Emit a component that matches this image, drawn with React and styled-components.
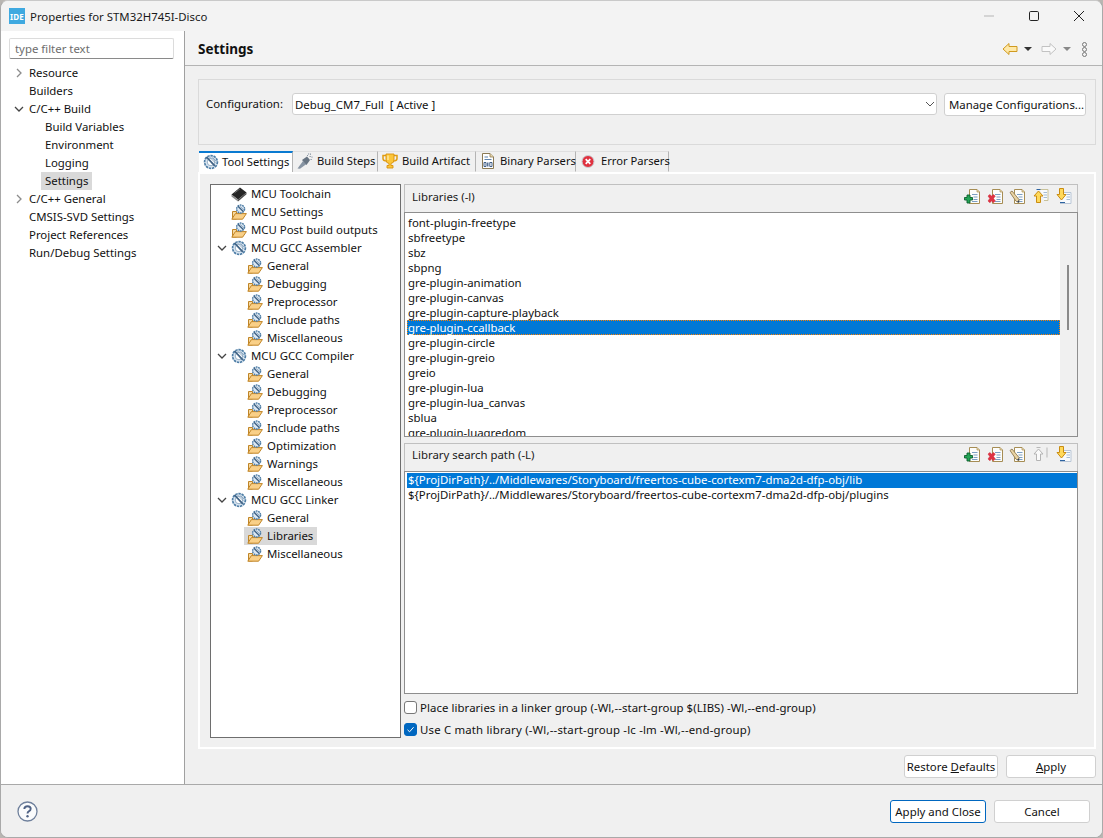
import React from 'react'
import styled, { createGlobalStyle } from 'styled-components'

const GlobalStyle = createGlobalStyle`
  html, body {
    margin: 0;
    padding: 0;
    background: #b9b6b2;
    overflow: hidden;
  }
  * {
    box-sizing: border-box;
  }
`

const GearIcon = () => (
  <svg width="16" height="16" viewBox="0 0 16 16">
    <circle cx="8" cy="8" r="6.4" fill="#dbe7f2" stroke="#4f7ea6" strokeWidth="1.7" strokeDasharray="2.4 0.8" />
    <circle cx="8" cy="8" r="3.8" fill="#fff" stroke="#7d9db9" strokeWidth="0.8" />
    <path d="M3.5 3 L11.8 11.8" stroke="#3f6285" strokeWidth="1.8" />
    <path d="M6.5 3 L12.5 9 M9.5 3.5 L13 7" stroke="#8aa6bf" strokeWidth="0.9" />
  </svg>
)

const GearFolderIcon = () => (
  <svg width="16" height="16" viewBox="0 0 16 16">
    <path d="M1.5 15 V7.5 H5.5 V15 Z" fill="#f6d9a0" stroke="#c08526" strokeWidth="1" />
    <path d="M0.8 15.2 L4.4 9.6 H15.4 L11.6 15.2 Z" fill="#f9d088" stroke="#c08526" strokeWidth="1" />
    <circle cx="9.6" cy="5" r="4" fill="#dbe7f2" stroke="#4f7ea6" strokeWidth="1.4" strokeDasharray="1.8 0.7" />
    <path d="M7 2.3 L12.3 7.6" stroke="#3f6285" strokeWidth="1.4" />
    <path d="M9.3 2.3 L13 6" stroke="#8aa6bf" strokeWidth="0.8" />
  </svg>
)

const ChipIcon = () => (
  <svg width="16" height="16" viewBox="0 0 16 16">
    <path d="M0.5 8.5 L9 1.5 L15.5 6.5 L7 13.5 Z" fill="#262626" />
    <path d="M0.5 8.5 L7 13.5 L7 15.5 L0.5 10.5 Z" fill="#8a8a8a" />
    <path d="M7 13.5 L15.5 6.5 L15.5 8.2 L7 15.5 Z" fill="#4a4a4a" />
    <path d="M3.5 7 L9 2.8" stroke="#666" strokeWidth="1" />
  </svg>
)

const SprayIcon = () => (
  <svg width="16" height="16" viewBox="0 0 16 16">
    <path d="M0.5 15.5 L6 8 L9.5 11 L3 15.8 Z" fill="#8794a3" />
    <path d="M5 7 L10 3.5 L13 7 L9.5 12 Z" fill="#677482" />
    <path d="M11 1 h1.2 M13.5 0.5 v1.3 M12.5 3.5 h1.3 M15 3.5 v1.2 M13.5 6.5 h1.3 M10 2.5 h1" stroke="#8794a3" strokeWidth="1" />
  </svg>
)

const TrophyIcon = () => (
  <svg width="16" height="16" viewBox="0 0 16 16">
    <path d="M1 2.5 H15 V5.5 Q15 8 11 8 H5 Q1 8 1 5.5 Z" fill="none" stroke="#e09c10" strokeWidth="1.5" />
    <path d="M4 1 H12 V7 Q12 10 9 10.5 V12.5 H11 V15 H5 V12.5 H7 V10.5 Q4 10 4 7 Z" fill="#fcc63a" stroke="#d9920f" strokeWidth="0.9" />
    <path d="M6 2.5 V7" stroke="#fff0b5" strokeWidth="1.2" />
  </svg>
)

const BinaryIcon = () => (
  <svg width="16" height="16" viewBox="0 0 16 16">
    <path d="M2.5 0.5 H10 L13.5 4 V15.5 H2.5 Z" fill="#fff" stroke="#8b7a55" strokeWidth="1" />
    <path d="M10 0.5 V4 H13.5" fill="#ead9aa" stroke="#8b7a55" strokeWidth="0.8" />
    <path d="M4.5 4 H8 M4.5 6.5 H11.5" stroke="#5c82ad" strokeWidth="1" />
    <path d="M4 9.5 H6 V13.5 H4 Z M9.8 9.5 H12 V13.5 H9.8 Z" fill="none" stroke="#2d4f7c" strokeWidth="0.9" />
    <path d="M7.8 9.5 V13.5" stroke="#2d4f7c" strokeWidth="1.2" />
  </svg>
)

const ErrorIcon = () => (
  <svg width="16" height="16" viewBox="0 0 16 16">
    <circle cx="8" cy="8.5" r="6" fill="#e0313f" stroke="#c9d1d6" strokeWidth="1" />
    <path d="M5.7 6.2 L10.3 10.8 M10.3 6.2 L5.7 10.8" stroke="#fff" strokeWidth="1.7" />
  </svg>
)

const DocBase = () => (
  <>
    <path d="M5.5 1.5 H13 L15.5 4 V15.5 H5.5 Z" fill="#fdfdfb" stroke="#a68d54" strokeWidth="1" />
    <path d="M13 1.5 V4 H15.5" fill="#e7d7ac" stroke="#a68d54" strokeWidth="0.7" />
    <path d="M8 6.5 H13.5 M9.5 9 H13.5 M9.5 11.5 H13.5 M8 13.5 H13.5" stroke="#7c9fc4" strokeWidth="1" />
  </>
)

const AddIcon = () => (
  <svg width="16" height="16" viewBox="0 0 16 16">
    <DocBase />
    <path d="M3 7 H6 V9.5 H8.5 V12 H6 V15 H3 V12 H0.5 V9.5 H3 Z" fill="#23a455" stroke="#0c5f2e" strokeWidth="0.9" />
  </svg>
)

const RemoveIcon = () => (
  <svg width="16" height="16" viewBox="0 0 16 16">
    <DocBase />
    <path d="M1 8 L3 6.5 L4.6 8.3 L6.3 6.5 L8.3 8 L6.5 10.5 L8.3 13 L6.3 14.7 L4.6 12.8 L3 14.7 L1 13 L2.8 10.5 Z" fill="#de3345" stroke="#d0202f" strokeWidth="0.5" />
  </svg>
)

const EditIcon = () => (
  <svg width="16" height="16" viewBox="0 0 16 16">
    <DocBase />
    <path d="M1 4.5 L3 3 L10 11.5 L10 14.5 L7 13.2 Z" fill="#e9d3a3" stroke="#8f7a52" strokeWidth="0.9" />
    <path d="M8 14 L10 14.5 L10 12 Z" fill="#2d3e5c" />
  </svg>
)

const UpDocIcon = ({ disabled }) => (
  <svg width="17" height="16" viewBox="-1 0 17 16" overflow="visible">
    {disabled ? (
      <>
        <path d="M14 1.5 V11.5" stroke="#b7b7b7" strokeWidth="1" />
        <path d="M3.5 1.5 H7.5" stroke="#b7b7b7" strokeWidth="1" />
      </>
    ) : (
      <>
        <path d="M7 1.5 H15 V12.5 H11" fill="#f8fafc" stroke="#c9c29a" strokeWidth="1" />
        <path d="M3.5 1.5 H7.5" stroke="#2d63a0" strokeWidth="1" />
        <path d="M10.5 4.5 H14 M10.5 7 H14 M10.5 9.5 H14" stroke="#a5bcd4" strokeWidth="1" />
      </>
    )}
    <path
      d="M5.5 3 L10 8 H7.5 V14.5 H3.5 V8 H1 Z"
      fill={disabled ? '#fafafa' : '#ffd95a'}
      stroke={disabled ? '#b4b4b4' : '#c98c12'}
      strokeWidth="1"
    />
  </svg>
)

const DownDocIcon = () => (
  <svg width="17" height="16" viewBox="-1 0 17 16" overflow="visible">
    <path d="M7 4.5 H15 V15.5 H4" fill="#f8fafc" stroke="#b9c6d6" strokeWidth="1" />
    <path d="M4 14.5 H9" stroke="#2d63a0" strokeWidth="1" />
    <path d="M10.5 6.5 H14 M10.5 9 H14 M10.5 11.5 H14" stroke="#a5bcd4" strokeWidth="1" />
    <path d="M3.5 0.5 H7.5 V6.5 H10 L5.5 12 L1 6.5 H3.5 Z" fill="#ffd95a" stroke="#c98c12" strokeWidth="1" />
  </svg>
)

const NavArrow = ({ dir, enabled }) => (
  <svg width="16" height="14" viewBox="0 0 16 14">
    <path
      d={dir === 'left' ? 'M1 7 L7 1.5 V4.5 H15 V9.5 H7 V12.5 Z' : 'M15 7 L9 1.5 V4.5 H1 V9.5 H9 V12.5 Z'}
      fill={enabled ? '#ffe9a8' : '#fafafa'}
      stroke={enabled ? '#d09a20' : '#c2c2c2'}
      strokeWidth="1"
    />
  </svg>
)

const Chevron = ({ open }) => (
  <svg width="10" height="10" viewBox="0 0 10 10">
    <path
      d={open ? 'M1 3 L5 7 L9 3' : 'M3 1 L7 5 L3 9'}
      fill="none"
      stroke={open ? '#444' : '#8c8c8c'}
      strokeWidth="1.3"
    />
  </svg>
)

const iconFor = { gear: <GearIcon />, folder: <GearFolderIcon />, chip: <ChipIcon /> }

const sidebarItems = [
  { label: 'Resource', arrow: 'closed' },
  { label: 'Builders' },
  { label: 'C/C++ Build', arrow: 'open' },
  { label: 'Build Variables', level: 1 },
  { label: 'Environment', level: 1 },
  { label: 'Logging', level: 1 },
  { label: 'Settings', level: 1, selected: true },
  { label: 'C/C++ General', arrow: 'closed' },
  { label: 'CMSIS-SVD Settings' },
  { label: 'Project References' },
  { label: 'Run/Debug Settings' },
]

const toolItems = [
  { label: 'MCU Toolchain', icon: 'chip' },
  { label: 'MCU Settings', icon: 'folder' },
  { label: 'MCU Post build outputs', icon: 'folder' },
  { label: 'MCU GCC Assembler', icon: 'gear', open: true },
  { label: 'General', icon: 'folder', level: 1 },
  { label: 'Debugging', icon: 'folder', level: 1 },
  { label: 'Preprocessor', icon: 'folder', level: 1 },
  { label: 'Include paths', icon: 'folder', level: 1 },
  { label: 'Miscellaneous', icon: 'folder', level: 1 },
  { label: 'MCU GCC Compiler', icon: 'gear', open: true },
  { label: 'General', icon: 'folder', level: 1 },
  { label: 'Debugging', icon: 'folder', level: 1 },
  { label: 'Preprocessor', icon: 'folder', level: 1 },
  { label: 'Include paths', icon: 'folder', level: 1 },
  { label: 'Optimization', icon: 'folder', level: 1 },
  { label: 'Warnings', icon: 'folder', level: 1 },
  { label: 'Miscellaneous', icon: 'folder', level: 1 },
  { label: 'MCU GCC Linker', icon: 'gear', open: true },
  { label: 'General', icon: 'folder', level: 1 },
  { label: 'Libraries', icon: 'folder', level: 1, selected: true },
  { label: 'Miscellaneous', icon: 'folder', level: 1 },
]

const libraries = [
  'font-plugin-freetype',
  'sbfreetype',
  'sbz',
  'sbpng',
  'gre-plugin-animation',
  'gre-plugin-canvas',
  'gre-plugin-capture-playback',
  'gre-plugin-ccallback',
  'gre-plugin-circle',
  'gre-plugin-greio',
  'greio',
  'gre-plugin-lua',
  'gre-plugin-lua_canvas',
  'sblua',
  'gre-plugin-luagredom',
]

const tabs = [
  { label: 'Tool Settings', icon: <GearIcon />, width: 94, gap: 3, active: true },
  { label: 'Build Steps', icon: <SprayIcon />, width: 85, gap: 4 },
  { label: 'Build Artifact', icon: <TrophyIcon />, width: 98, gap: 4 },
  { label: 'Binary Parsers', icon: <BinaryIcon />, width: 100, gap: 4 },
  { label: 'Error Parsers', icon: <ErrorIcon />, width: 93, gap: 5 },
]

const App = () => {
  return (
    <Window>
      <GlobalStyle />
      <TitleBar>
        <AppBadge>IDE</AppBadge>
        <TitleText>Properties for STM32H745I-Disco</TitleText>
        <WindowControls>
          <WindowButton>
            <svg width="12" height="12" viewBox="0 0 12 12"><path d="M1 6 H11" stroke="#b5b5b5" strokeWidth="1" /></svg>
          </WindowButton>
          <WindowButton>
            <svg width="12" height="12" viewBox="0 0 12 12"><rect x="1.5" y="1.5" width="9" height="9" rx="1.2" fill="none" stroke="#222" strokeWidth="1" /></svg>
          </WindowButton>
          <WindowButton>
            <svg width="12" height="12" viewBox="0 0 12 12"><path d="M1 1 L11 11 M11 1 L1 11" stroke="#222" strokeWidth="1" /></svg>
          </WindowButton>
        </WindowControls>
      </TitleBar>

      <Body>
        <Sidebar>
          <FilterInput placeholder="type filter text" />
          <SidebarTree>
            {sidebarItems.map(item => (
              <SidebarRow key={item.label} $level={item.level || 0}>
                {item.arrow && (
                  <SidebarArrow>
                    <Chevron open={item.arrow === 'open'} />
                  </SidebarArrow>
                )}
                <SidebarLabel $selected={item.selected}>{item.label}</SidebarLabel>
              </SidebarRow>
            ))}
          </SidebarTree>
        </Sidebar>

        <Main>
          <PageHeader>
            <PageTitle>Settings</PageTitle>
            <NavTools>
              <NavArrow dir="left" enabled />
              <DropCaret $dark />
              <NavArrow dir="right" />
              <DropCaret />
              <MenuDots><i /><i /><i /></MenuDots>
            </NavTools>
          </PageHeader>

          <Content>
            <ConfigGroup>
              <FieldLabel>Configuration:</FieldLabel>
              <ConfigCombo>
                <span>Debug_CM7_Full  [ Active ]</span>
                <svg width="10" height="6" viewBox="0 0 10 6"><path d="M1 1 L5 5 L9 1" fill="none" stroke="#555" strokeWidth="1" /></svg>
              </ConfigCombo>
              <ManageButton>Manage Configurations...</ManageButton>
            </ConfigGroup>

            <TabBar>
              {tabs.map(tab => (
                <Tab key={tab.label} $active={tab.active} $width={tab.width} $gap={tab.gap}>
                  {tab.icon}
                  <span>{tab.label}</span>
                </Tab>
              ))}
            </TabBar>

            <TabPanel>
              <ToolTree>
                {toolItems.map((item, i) => (
                  <ToolRow key={i} $level={item.level || 0}>
                    <ToolArrow>{item.open && <Chevron open />}</ToolArrow>
                    <ToolItem $selected={item.selected}>
                      <ToolIcon>{iconFor[item.icon]}</ToolIcon>
                      <ToolLabel>{item.label}</ToolLabel>
                    </ToolItem>
                  </ToolRow>
                ))}
              </ToolTree>

              <OptionsColumn>
                <SectionHeader>
                  <SectionTitle>Libraries (-l)</SectionTitle>
                  <SectionTools>
                    <AddIcon /><RemoveIcon /><EditIcon /><UpDocIcon /><DownDocIcon />
                  </SectionTools>
                </SectionHeader>
                <LibraryList>
                  <LibraryItems>
                    {libraries.map(name => (
                      <LibraryRow key={name} $focused={name === 'gre-plugin-ccallback'}>{name}</LibraryRow>
                    ))}
                  </LibraryItems>
                  <ScrollTrack><ScrollThumb /></ScrollTrack>
                </LibraryList>

                <SectionHeader $second>
                  <SectionTitle>Library search path (-L)</SectionTitle>
                  <SectionTools>
                    <AddIcon /><RemoveIcon /><EditIcon /><UpDocIcon disabled /><DownDocIcon />
                  </SectionTools>
                </SectionHeader>
                <PathList>
                  <ListRow $selected>{'${ProjDirPath}/../Middlewares/Storyboard/freertos-cube-cortexm7-dma2d-dfp-obj/lib'}</ListRow>
                  <ListRow>{'${ProjDirPath}/../Middlewares/Storyboard/freertos-cube-cortexm7-dma2d-dfp-obj/plugins'}</ListRow>
                </PathList>

                <CheckRow>
                  <CheckBox />
                  <CheckLabel $tracking={0.07}>Place libraries in a linker group (-Wl,--start-group $(LIBS) -Wl,--end-group)</CheckLabel>
                </CheckRow>
                <CheckRow>
                  <CheckBox $checked>
                    <svg width="9" height="9" viewBox="0 0 9 9"><path d="M1.5 4.8 L3.6 6.8 L7.6 2.2" fill="none" stroke="#fff" strokeWidth="1" /></svg>
                  </CheckBox>
                  <CheckLabel $tracking={0.18}>Use C math library (-Wl,--start-group -lc -lm -Wl,--end-group)</CheckLabel>
                </CheckRow>
              </OptionsColumn>
            </TabPanel>

            <PageButtons>
              <PushButton $width={94}>Restore <u>D</u>efaults</PushButton>
              <PushButton $width={90}><u>A</u>pply</PushButton>
            </PageButtons>
          </Content>
        </Main>
      </Body>

      <Footer>
        <HelpIcon>
          <svg width="21" height="21" viewBox="0 0 21 21">
            <circle cx="10.5" cy="10.5" r="9.5" fill="#fafbfc" stroke="#6f809c" strokeWidth="1.3" />
            <path d="M7.3 8 Q7.5 5.2 10.5 5.2 Q13.7 5.2 13.7 7.8 Q13.7 9.4 11.8 10.4 Q10.5 11.1 10.5 12.6" fill="none" stroke="#4f6285" strokeWidth="1.9" />
            <circle cx="10.5" cy="15.3" r="1.2" fill="#4f6285" />
          </svg>
        </HelpIcon>
        <FooterButtons>
          <PushButton $width={96} $primary>Apply and Close</PushButton>
          <PushButton $width={96}>Cancel</PushButton>
        </FooterButtons>
      </Footer>
    </Window>
  )
}

const Window = styled.div`
  width: 1103px;
  height: 838px;
  display: flex;
  flex-direction: column;
  background: #f0f0f0;
  border-radius: 8px;
  border: 1px solid #a9a9a9;
  border-top-color: #c9c9c9;
  overflow: hidden;
  font-family: 'Noto Sans', 'Open Sans', sans-serif;
  font-size: 11.4px;
  color: #111;
`

const TitleBar = styled.div`
  height: 30px;
  flex: none;
  display: flex;
  align-items: center;
  padding-left: 8px;
  background: #f3f3f3;
`

const AppBadge = styled.div`
  width: 16px;
  height: 16px;
  background: #3fa9e0;
  color: #fff;
  font-size: 8px;
  font-weight: 700;
  letter-spacing: 0.2px;
  display: flex;
  align-items: center;
  justify-content: center;
`

const TitleText = styled.div`
  margin-left: 5px;
  font-size: 11.4px;
  color: #1a1a1a;
`

const WindowControls = styled.div`
  margin-left: auto;
  display: flex;
  margin-right: 1px;
`

const WindowButton = styled.div`
  width: 45px;
  height: 30px;
  display: flex;
  align-items: center;
  justify-content: center;
`

const Body = styled.div`
  flex: 1;
  display: flex;
  min-height: 0;
`

const Sidebar = styled.div`
  width: 184px;
  flex: none;
  background: #fff;
  border-right: 1px solid #a0a0a0;
  padding: 7px 10px 0 8px;
`

const FilterInput = styled.input`
  display: block;
  width: 165px;
  height: 21px;
  border: 1px solid #dcdcdc;
  border-bottom-color: #8a8a8a;
  border-radius: 2px;
  padding: 0 5px;
  font: inherit;
  outline: none;
  &::placeholder {
    color: #6d6d6d;
    opacity: 1;
  }
`

const SidebarTree = styled.div`
  margin: 5px -10px 0 -8px;
`

const SidebarRow = styled.div`
  position: relative;
  height: 18px;
  display: flex;
  align-items: center;
  padding-left: ${props => (props.$level ? 40 : 24)}px;
`

const SidebarArrow = styled.span`
  position: absolute;
  left: 13px;
  top: 4px;
  display: flex;
`

const SidebarLabel = styled.span`
  height: 18px;
  line-height: 18px;
  padding: 0 4px;
  background: ${props => (props.$selected ? '#d9d9d9' : 'transparent')};
`

const Main = styled.div`
  flex: 1;
  min-width: 0;
  display: flex;
  flex-direction: column;
  background: #f0f0f0;
`

const PageHeader = styled.div`
  height: 35px;
  flex: none;
  display: flex;
  align-items: center;
  padding: 2px 13px 0;
  background: #f3f3f3;
  border-bottom: 1px solid #b4b4b4;
`

const PageTitle = styled.div`
  font-size: 13.5px;
  font-weight: 700;
  color: #111;
`

const NavTools = styled.div`
  margin-left: auto;
  display: flex;
  align-items: center;
  margin-right: 2px;
`

const DropCaret = styled.span`
  width: 0;
  height: 0;
  margin: 0 9px 0 6px;
  border-left: 4px solid transparent;
  border-right: 4px solid transparent;
  border-top: 4px solid ${props => (props.$dark ? '#333' : '#888')};
`

const MenuDots = styled.span`
  display: flex;
  flex-direction: column;
  gap: 0;
  margin-left: 2px;
  i {
    width: 5px;
    height: 5px;
    border-radius: 50%;
    border: 1px solid #777;
    background: #f3f3f3;
  }
`

const Content = styled.div`
  flex: 1;
  min-height: 0;
  padding: 13px 6px 0 13px;
  display: flex;
  flex-direction: column;
`

const ConfigGroup = styled.div`
  height: 66px;
  flex: none;
  border: 1px solid #dadada;
  display: flex;
  align-items: flex-start;
  padding: 13px 9px 0 7px;
`

const FieldLabel = styled.div`
  width: 86px;
  flex: none;
  line-height: 22px;
`

const ConfigCombo = styled.div`
  width: 645px;
  height: 22px;
  flex: none;
  background: #fff;
  border: 1px solid #d0d0d0;
  border-radius: 3px;
  display: flex;
  align-items: center;
  justify-content: space-between;
  padding: 0 1px 0 2px;
  white-space: pre;
`

const PushButton = styled.button`
  width: ${props => props.$width}px;
  height: 23px;
  padding: 0;
  background: #fff;
  border: 1px solid ${props => (props.$primary ? '#0067c0' : '#d0d0d0')};
  border-radius: 3px;
  font: inherit;
  color: #111;
  white-space: nowrap;
`

const ManageButton = styled(PushButton)`
  width: 143px;
  margin-left: 7px;
  padding-left: 3px;
`

const TabBar = styled.div`
  display: flex;
  height: 21px;
  flex: none;
  margin-top: 6px;
  padding-left: 1px;
`

const Tab = styled.div`
  width: ${props => props.$width}px;
  display: flex;
  align-items: center;
  gap: ${props => props.$gap}px;
  padding: 0 0 2px 4px;
  white-space: nowrap;
  font-size: 11.2px;
  background: ${props => (props.$active ? '#fff' : '#f0f0f0')};
  border-right: 1px solid #b4b4b4;
  border-top: ${props => (props.$active ? '2px solid #0a7ad1' : '1px solid #e0e0e0')};
  border-bottom: ${props => (props.$active ? 'none' : '1px solid #f0f0f0')};
  svg {
    flex: none;
  }
`

const TabPanel = styled.div`
  height: 577px;
  flex: none;
  display: flex;
  gap: 3px;
  padding: 10px 16px 9px 10px;
  border: 2px solid #fff;
  background: #f0f0f0;
`

const ToolTree = styled.div`
  width: 191px;
  flex: none;
  background: #fff;
  border: 1px solid #6e6e6e;
  overflow: hidden;
`

const ToolRow = styled.div`
  height: 18px;
  display: flex;
  align-items: center;
  padding-left: ${props => (props.$level ? 22 : 6)}px;
`

const ToolArrow = styled.span`
  width: 14px;
  flex: none;
  display: flex;
  align-items: center;
`

const ToolItem = styled.span`
  height: 18px;
  display: flex;
  align-items: center;
  margin-left: -3px;
  padding-left: 3px;
  background: ${props => (props.$selected ? '#d9d9d9' : 'transparent')};
`

const ToolIcon = styled.span`
  width: 16px;
  height: 16px;
  flex: none;
  display: flex;
`

const ToolLabel = styled.span`
  line-height: 18px;
  padding: 0 4px;
`

const OptionsColumn = styled.div`
  flex: 1;
  min-width: 0;
  display: flex;
  flex-direction: column;
`

const SectionHeader = styled.div`
  height: 28px;
  flex: none;
  margin-top: ${props => (props.$second ? 6 : 0)}px;
  display: flex;
  align-items: center;
  justify-content: space-between;
  padding: 0 5px ${props => (props.$second ? 7 : 5)}px 7px;
  border: 1px solid #c0c0c0;
  border-bottom: none;
`

const SectionTitle = styled.div`
  color: #1a1a1a;
`

const SectionTools = styled.div`
  display: flex;
  gap: 6.5px;
`

const LibraryList = styled.div`
  height: 225px;
  flex: none;
  display: flex;
  background: #fff;
  border: 1px solid #8e8e8e;
  overflow: hidden;
`

const LibraryItems = styled.div`
  flex: 1;
  min-width: 0;
  padding: 2px 0 0 2px;
`

const ScrollTrack = styled.div`
  width: 17px;
  flex: none;
  background: #f0f0f0;
  position: relative;
`

const ScrollThumb = styled.div`
  position: absolute;
  left: 7px;
  top: 52px;
  width: 2px;
  height: 65px;
  background: #8a8a8a;
`

const ListRow = styled.div`
  height: 15px;
  line-height: 14px;
  padding-left: 1px;
  white-space: nowrap;
  ${props => props.$selected && 'background: #0078d7; color: #fff;'}
`

const LibraryRow = styled(ListRow)`
  line-height: 16px;
  ${props => props.$focused && 'background: #0078d7; color: #fff; border: 1px dotted #ff8000; padding-left: 0; line-height: 14px;'}
`

const PathList = styled.div`
  height: 223px;
  flex: none;
  margin-bottom: 2px;
  background: #fff;
  border: 1px solid #8e8e8e;
  padding: 1px 0 0 2px;
`

const CheckRow = styled.div`
  height: 22px;
  flex: none;
  display: flex;
  align-items: center;
  gap: 3px;
`

const CheckBox = styled.span`
  width: 13px;
  height: 13px;
  flex: none;
  border-radius: 3px;
  border: 1px solid ${props => (props.$checked ? '#0067c0' : '#777')};
  background: ${props => (props.$checked ? '#0067c0' : '#fff')};
  display: flex;
  align-items: center;
  justify-content: center;
`

const CheckLabel = styled.span`
  letter-spacing: ${props => props.$tracking}px;
  white-space: nowrap;
`

const PageButtons = styled.div`
  display: flex;
  justify-content: flex-end;
  gap: 8px;
  margin-top: 6px;
`

const Footer = styled.div`
  height: 53px;
  flex: none;
  display: flex;
  align-items: flex-start;
  justify-content: space-between;
  padding: 15px 12px 0 16px;
  background: #f0f0f0;
  border-top: 1px solid #a9a9a9;
`

const HelpIcon = styled.div`
  display: flex;
  margin-top: 1px;
`

const FooterButtons = styled.div`
  display: flex;
  gap: 8px;
`

export default App
